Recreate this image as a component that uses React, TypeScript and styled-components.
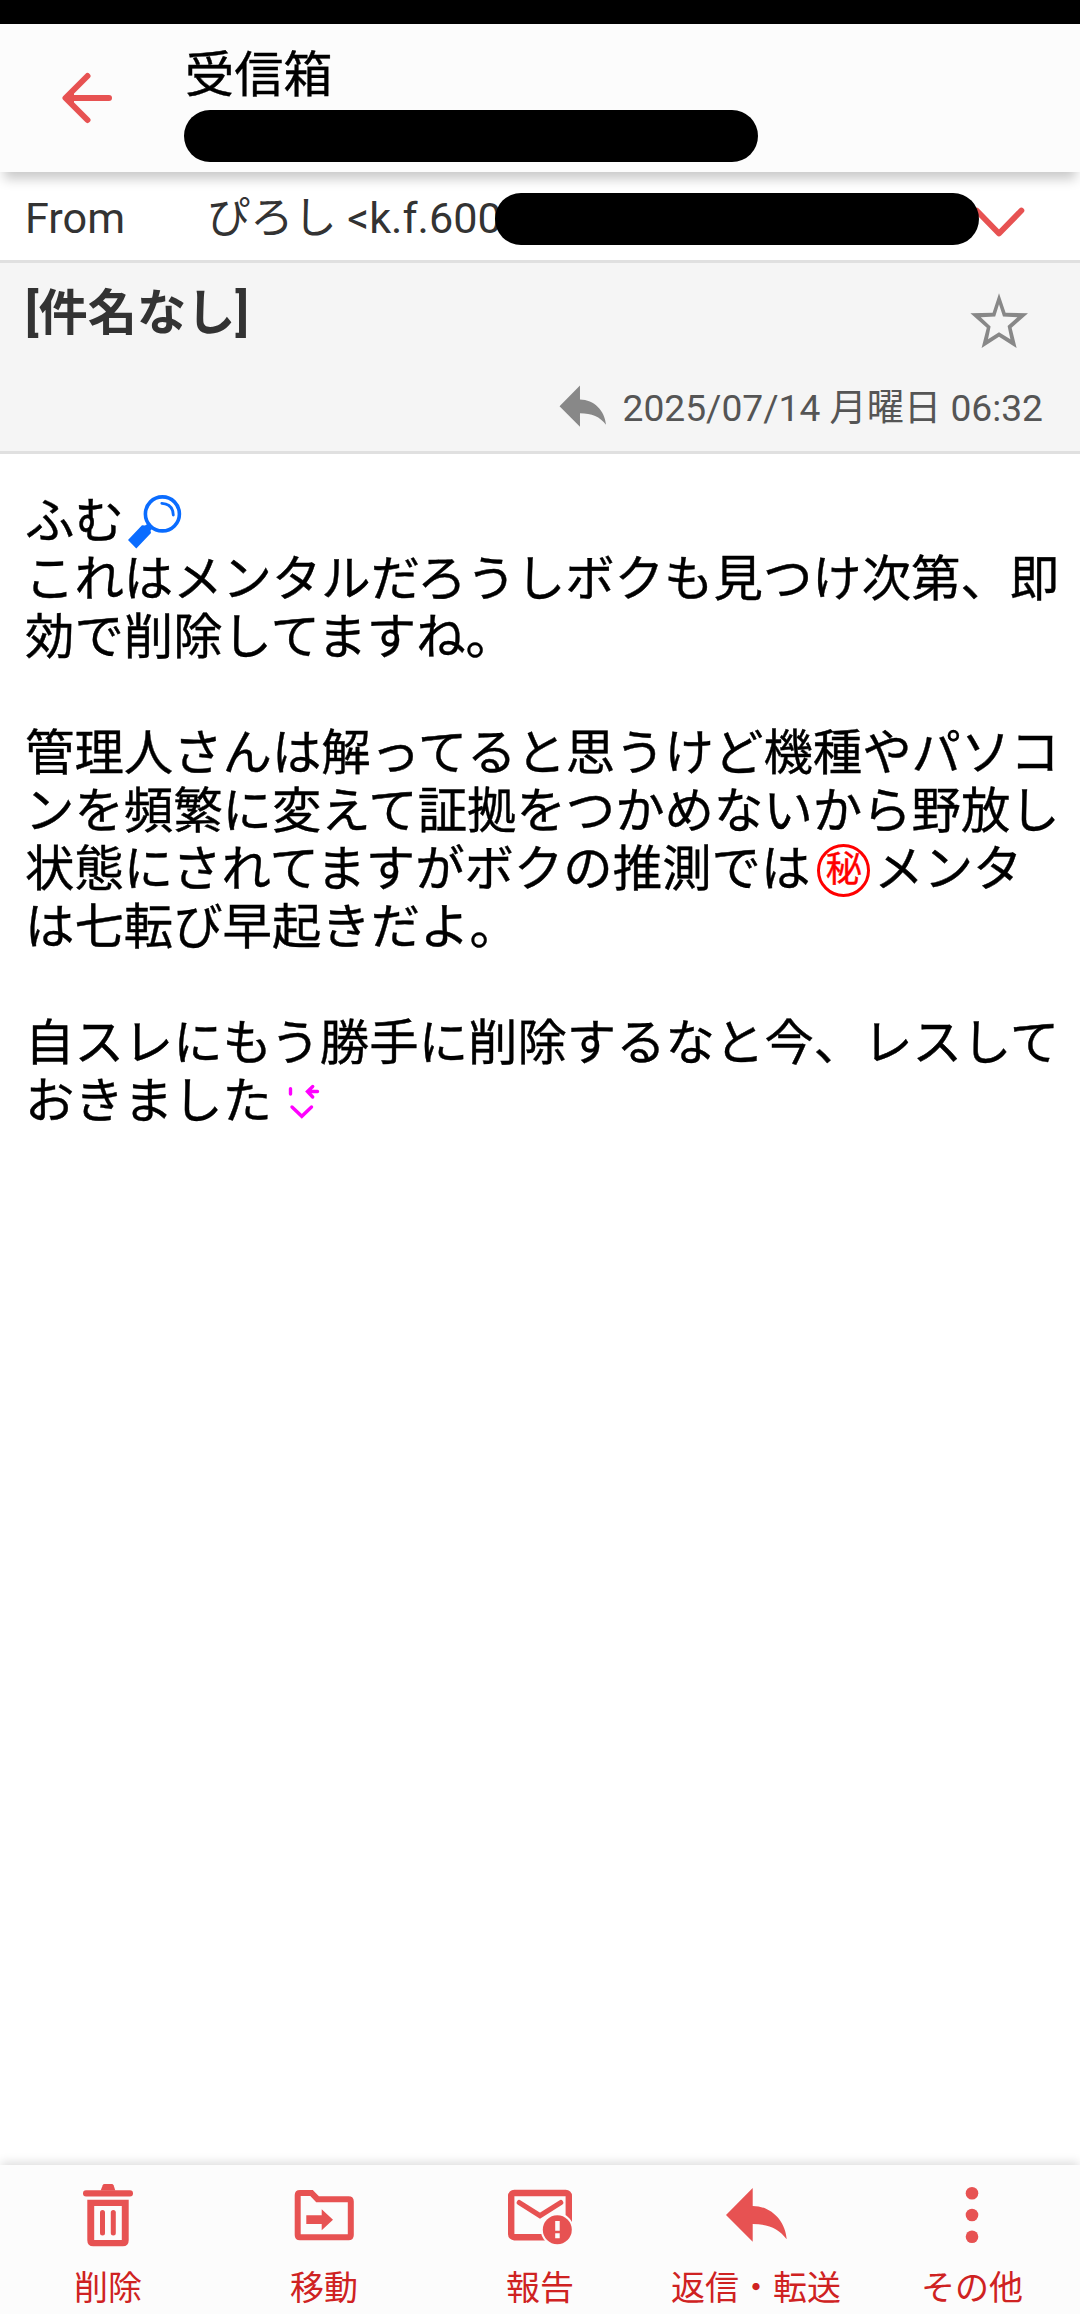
import React from "react";
import styled, { createGlobalStyle } from "styled-components";

const accent = "#e75252";
const labelRed = "#cf2222";

const GlobalStyle = createGlobalStyle`
  * { box-sizing: border-box; }
  body {
    margin: 0;
    background: #fff;
    font-family: Roboto, "Noto Sans CJK JP", sans-serif;
  }
  svg { display: block; flex: none; }
`;

const Screen = styled.div`
  display: flex;
  flex-direction: column;
  width: 1080px;
  height: 2314px;
  background: #fff;
  overflow: hidden;
`;

const StatusBar = styled.div`
  height: 24px;
  flex: none;
  background: #000;
`;

const Header = styled.header`
  display: flex;
  align-items: flex-start;
  flex: none;
  height: 148px;
  padding-left: 62px;
  background: #fcfcfc;
  position: relative;
  z-index: 1;
  box-shadow: 0 11px 11px -4px rgba(0, 0, 0, 0.21);
`;

const BackButton = styled.button`
  width: 122px;
  padding: 48px 0 0;
  border: 0;
  background: none;
`;

const Heading = styled.div`
  display: flex;
  flex-direction: column;
`;

const Title = styled.h1`
  margin: 22px 0 6px;
  padding-left: 1px;
  height: 58px;
  line-height: 58px;
  font-size: 49.2px;
  font-weight: 400;
  color: #000;
  -webkit-text-stroke: 0.4px #000;
`;

const Mask = styled.div<{ $width: number }>`
  width: ${(p) => p.$width}px;
  height: 52px;
  border-radius: 26px;
  background: #000;
`;

const AddressMask = styled(Mask)`
  position: absolute;
  left: 495px;
  top: 21px;
`;

const FromRow = styled.div`
  position: relative;
  display: flex;
  flex: none;
  align-items: center;
  height: 91px;
  padding: 0 55px 0 25px;
  border-bottom: 3px solid #e0e0e0;
  color: #333;
  font-size: 43.2px;
  line-height: 50px;
`;

const FromLabel = styled.span`
  width: 182px;
  padding-top: 5px;
`;

const Sender = styled.span`
  flex: 1;
  padding-top: 5px;
  white-space: nowrap;
`;

const ExpandButton = styled.button`
  padding: 9px 0 0;
  border: 0;
  background: none;
`;

const SubjectPanel = styled.section`
  display: flex;
  flex-direction: column;
  flex: none;
  height: 191px;
  padding: 20px 37px 0 25px;
  border-bottom: 3px solid #e0e0e0;
  background: #f5f5f5;
`;

const SubjectLine = styled.div`
  display: flex;
  align-items: flex-start;
  justify-content: space-between;
  height: 92px;
  padding-right: 15px;
`;

const Subject = styled.h2`
  margin: 0;
  font-size: 49.2px;
  line-height: 60px;
  font-weight: 700;
  color: #333;
`;

const StarButton = styled.button`
  padding: 10px 0 0;
  border: 0;
  background: none;
`;

const DateLine = styled.div`
  display: flex;
  justify-content: flex-end;
  align-items: center;
  height: 60px;
  gap: 15px;
  font-size: 37.2px;
  color: #555;
`;

const MessageBody = styled.main`
  flex: 1;
  padding: 38px 0 0 25px;
  font-size: 49.4px;
  line-height: 58px;
  color: #000;
  -webkit-text-stroke: 0.4px #000;
`;

const Line = styled.div`
  display: flex;
  align-items: center;
  height: 58px;
  white-space: nowrap;
`;

const Emoji = styled.span<{ $before: number }>`
  margin-left: ${(p) => p.$before}px;
  padding-top: 2px;
`;

const Secret = styled.span`
  display: flex;
  align-items: center;
  justify-content: center;
  width: 53px;
  height: 53px;
  margin: 2px 4px 0 7px;
  border: 3.6px solid #f00;
  border-radius: 50%;
  color: #f00;
  font-size: 36px;
  font-weight: 400;
  line-height: 45px;
  -webkit-text-stroke: 0.4px #f00;
`;

const Toolbar = styled.nav`
  display: grid;
  grid-template-columns: repeat(5, 1fr);
  flex: none;
  height: 149px;
  background: #fcfcfc;
  box-shadow: 0 -4px 9px -1px rgba(0, 0, 0, 0.13);
`;

const Tool = styled.button`
  display: flex;
  flex-direction: column;
  align-items: center;
  padding: 17px 0 0;
  border: 0;
  background: none;
`;

const ToolLabel = styled.span`
  margin-top: 22px;
  font-family: Roboto, "Noto Sans CJK JP", sans-serif;
  font-size: 34px;
  line-height: 40px;
  color: ${labelRed};
  white-space: nowrap;
`;

const BackIcon = () => (
  <svg width="50" height="52" viewBox="0 0 50 52" fill="none" stroke={accent} strokeWidth="6" strokeLinecap="round" strokeLinejoin="round">
    <path d="M47 26H4M25.5 4L3.5 26L25.5 48" />
    <path d="M4 26L12 20V32Z" fill={accent} stroke="none" />
  </svg>
);

const ChevronIcon = () => (
  <svg width="52" height="36" viewBox="0 0 52 36" fill="none" stroke={accent} strokeWidth="5.8" strokeLinecap="round" strokeLinejoin="round">
    <path d="M3.6 7.5L26 30.5L48.4 7.5" />
  </svg>
);

const StarIcon = () => (
  <svg width="58" height="56" viewBox="0 0 58 56">
    <path
      fill="#888"
      fillRule="evenodd"
      d="M29 .3L35.6 19.7L58 20.3L41.6 34.7L46.6 55L29 43.7L11.6 55L16.8 34.7L.4 20.3L22.6 19.7ZM29 11.3L25.2 23.5L10.8 24.3L20.6 33.5L18 46.3L29 39.3L40.4 46.3L37.6 33L47.4 24.3L33 23.5Z"
    />
  </svg>
);

const ReplyIcon = ({ size, color }: { size: number; color: string }) => (
  <svg width={size} height={size} viewBox="0 0 64 64">
    <path fill={color} d="M2 33L28.7 6V24C47 24 61.5 39 62.7 57.3C55 46.5 44 42 28.7 42V59.7Z" />
  </svg>
);

const TrashIcon = () => (
  <svg width="64" height="64" viewBox="0 0 64 64" fill={accent} overflow="visible">
    <path d="M28.5 2H35.8Q37 2 37.6 3.3L39.3 8.6H24.7L26.7 3.3Q27.2 2 28.5 2Z" />
    <rect x="7" y="8.3" width="50" height="6.2" rx="3" />
    <path fillRule="evenodd" d="M11.3 17.7H52.7V58.3Q52.7 64.3 46.7 64.3H17.3Q11.3 64.3 11.3 58.3ZM18.2 24V58H45.8V24Z" />
    <rect x="24" y="28" width="5" height="25.4" rx="2.5" />
    <rect x="34.8" y="28" width="5" height="25.4" rx="2.5" />
  </svg>
);

const MoveIcon = () => (
  <svg width="64" height="64" viewBox="0 0 64 64">
    <path
      d="M8 11H19.5L25.5 17.2H56.5Q58.8 17.2 58.8 19.5V53Q58.8 55.3 56.5 55.3H8Q5.7 55.3 5.7 53V13.3Q5.7 11 8 11Z"
      fill="none"
      stroke={accent}
      strokeWidth="6"
    />
    <path fill={accent} d="M14.3 33.3H29.7V27.3L41 37.7L29.7 48.3V42H14.3Z" />
  </svg>
);

const ReportIcon = () => (
  <svg width="64" height="64" viewBox="0 0 64 64">
    <rect x="3.2" y="11" width="57.6" height="44.2" rx="3" fill="none" stroke={accent} strokeWidth="6.4" />
    <path d="M11.3 20.6L32 33.7L52.7 20.6" fill="none" stroke={accent} strokeWidth="5.2" strokeLinecap="round" />
    <circle cx="49.3" cy="47.7" r="16.6" fill="#fcfcfc" />
    <circle cx="49.3" cy="47.7" r="14.5" fill={accent} />
    <path fill="#fcfcfc" d="M47.2 39H51.7V48.7H47.2ZM47.2 51.3H51.7V56.3H47.2Z" />
  </svg>
);

const MoreIcon = () => (
  <svg width="64" height="64" viewBox="0 0 64 64" fill={accent}>
    <circle cx="32" cy="11.3" r="6.3" />
    <circle cx="32" cy="33" r="6.3" />
    <circle cx="32" cy="54.7" r="6.3" />
  </svg>
);

const MagnifierIcon = () => (
  <svg width="54" height="54" viewBox="0 0 54 54" fill="none" stroke="#0a6cff">
    <circle cx="34.4" cy="18.9" r="17" strokeWidth="3.6" />
    <path d="M33.8 8.3Q45 9 45.3 20" strokeWidth="2.8" strokeLinecap="round" />
    <path d="M0 45L14 30.2L17 30.5L21 28L25.5 32.5L22.5 35.5L23 38L8.3 53.4Z" fill="#0a6cff" stroke="none" />
  </svg>
);

const WinkIcon = () => (
  <svg width="34" height="36" viewBox="0 0 34 36" fill="none" stroke="#f0f" strokeWidth="3.4" strokeLinecap="round">
    <path d="M2.5 4.8V10M29.5 7.5H19.5M24.7 2.5L19.5 7.5L24.7 13M4 23L13.8 32.3L23.5 23" />
  </svg>
);

const tools = [
  { label: "削除", icon: <TrashIcon /> },
  { label: "移動", icon: <MoveIcon /> },
  { label: "報告", icon: <ReportIcon /> },
  { label: "返信・転送", icon: <ReplyIcon size={64} color={accent} /> },
  { label: "その他", icon: <MoreIcon /> },
];

export default function App() {
  return (
    <Screen lang="ja">
      <GlobalStyle />
      <StatusBar />
      <Header>
        <BackButton><BackIcon /></BackButton>
        <Heading>
          <Title>受信箱</Title>
          <Mask $width={574} />
        </Heading>
      </Header>
      <FromRow>
        <FromLabel>From</FromLabel>
        <Sender>ぴろし &lt;k.f.600</Sender>
        <ExpandButton><ChevronIcon /></ExpandButton>
        <AddressMask $width={484} />
      </FromRow>
      <SubjectPanel>
        <SubjectLine>
          <Subject>[件名なし]</Subject>
          <StarButton><StarIcon /></StarButton>
        </SubjectLine>
        <DateLine>
          <ReplyIcon size={49} color="#888" />
          <span>2025/07/14 月曜日 06:32</span>
        </DateLine>
      </SubjectPanel>
      <MessageBody>
        <Line>ふむ<Emoji $before={4}><MagnifierIcon /></Emoji></Line>
        <Line>これはメンタルだろうしボクも見つけ次第、即</Line>
        <Line>効で削除してますね。</Line>
        <Line />
        <Line>管理人さんは解ってると思うけど機種やパソコ</Line>
        <Line>ンを頻繁に変えて証拠をつかめないから野放し</Line>
        <Line>状態にされてますがボクの推測では<Secret>秘</Secret>メンタ</Line>
        <Line>は七転び早起きだよ。</Line>
        <Line />
        <Line>自スレにもう勝手に削除するなと今、レスして</Line>
        <Line>おきました<Emoji $before={16}><WinkIcon /></Emoji></Line>
      </MessageBody>
      <Toolbar>
        {tools.map((t) => (
          <Tool key={t.label}>
            {t.icon}
            <ToolLabel>{t.label}</ToolLabel>
          </Tool>
        ))}
      </Toolbar>
    </Screen>
  );
}
